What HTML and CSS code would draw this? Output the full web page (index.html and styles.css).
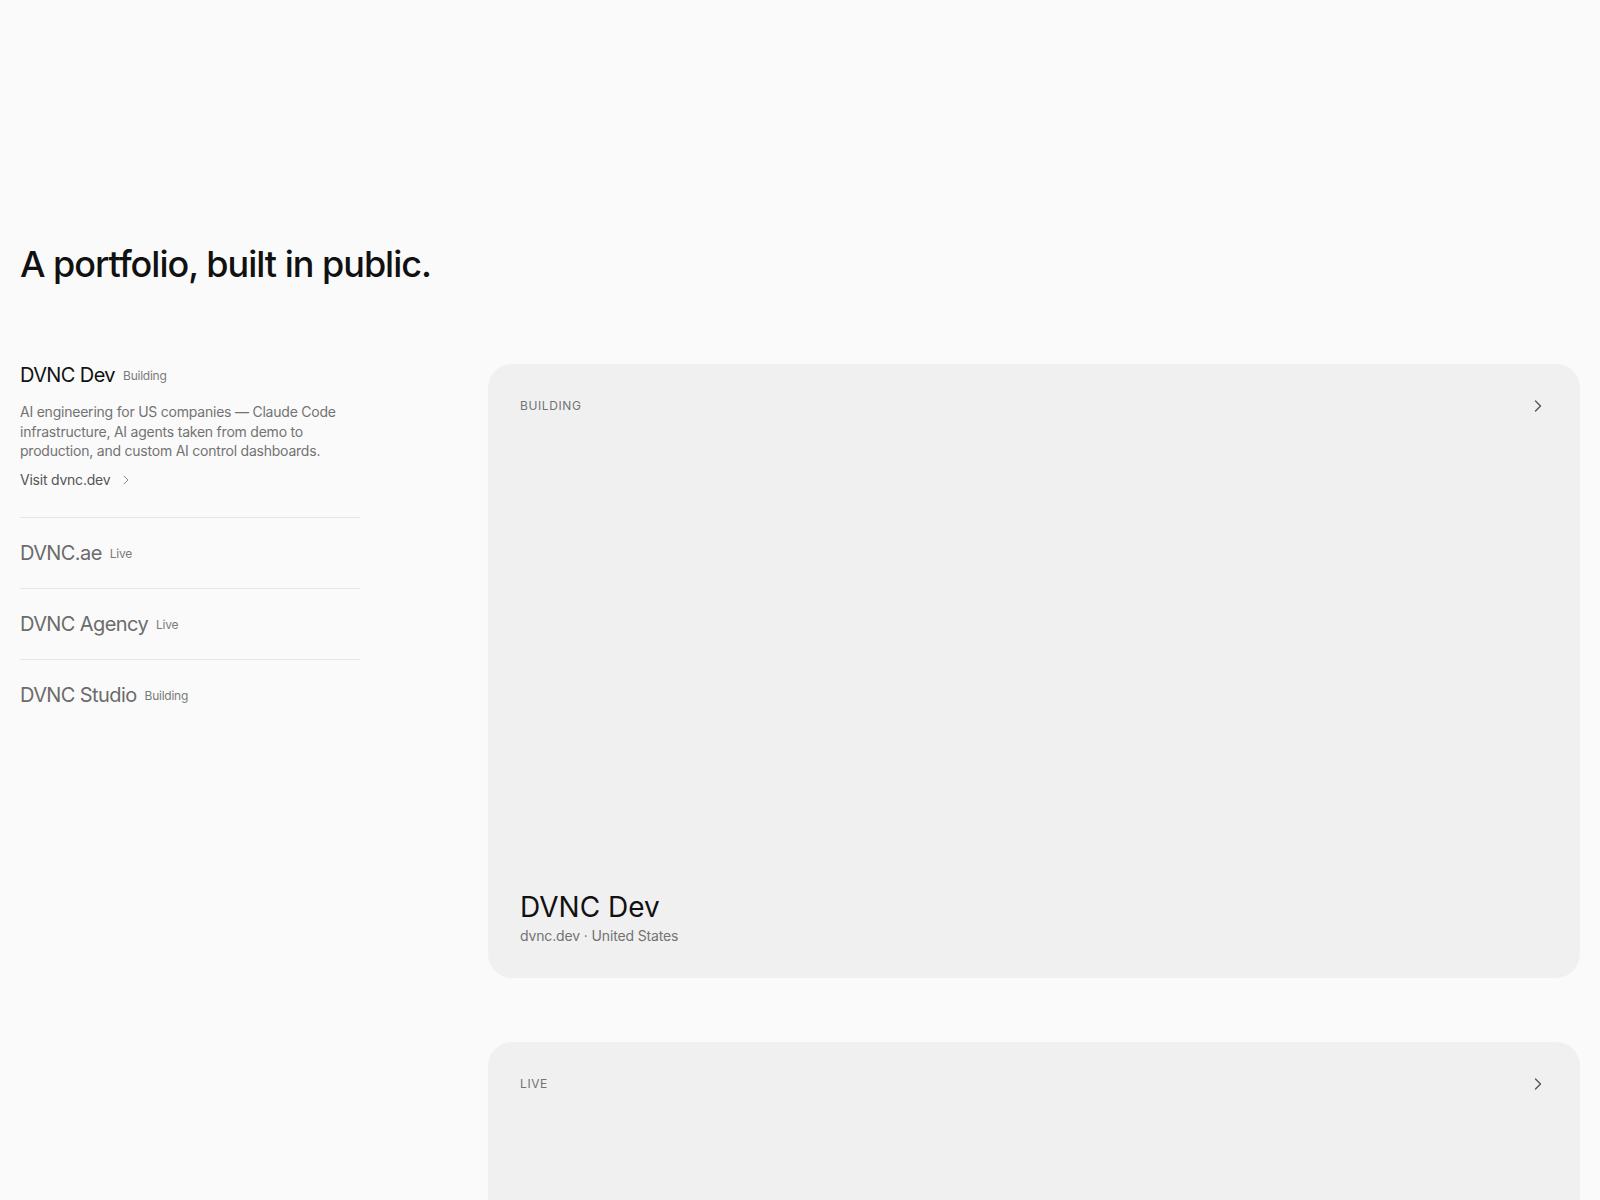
FILE: index.html
```html
<!DOCTYPE html>
<html lang="en">
<head>
  <meta charset="UTF-8" />
  <title>Portfolio</title>
  <link rel="stylesheet" href="styles.css">
</head>
<body>
  <main class="page">
    <h1 class="headline">A portfolio, built in public.</h1>

    <div class="layout">
      <ul class="ventures">
        <li class="venture active">
          <div class="venture-head">
            <span class="venture-name">DVNC Dev</span>
            <span class="venture-status">Building</span>
          </div>
          <p class="venture-desc">AI engineering for US companies — Claude Code infrastructure, AI agents taken from demo to production, and custom AI control dashboards.</p>
          <a class="venture-link" href="#">Visit dvnc.dev
            <svg width="16" height="16" viewBox="0 0 24 24" fill="none" stroke="currentColor" stroke-width="1.5" stroke-linecap="round" stroke-linejoin="round"><path d="m9 18 6-6-6-6"/></svg>
          </a>
        </li>
        <li class="venture">
          <div class="venture-head">
            <span class="venture-name">DVNC.ae</span>
            <span class="venture-status">Live</span>
          </div>
        </li>
        <li class="venture">
          <div class="venture-head">
            <span class="venture-name">DVNC Agency</span>
            <span class="venture-status">Live</span>
          </div>
        </li>
        <li class="venture">
          <div class="venture-head">
            <span class="venture-name">DVNC Studio</span>
            <span class="venture-status">Building</span>
          </div>
        </li>
      </ul>

      <div class="cards">
        <a class="card" href="#">
          <div class="card-top">
            <span class="card-label">Building</span>
            <svg class="card-arrow" width="20" height="20" viewBox="0 0 24 24" fill="none" stroke="currentColor" stroke-width="1.6" stroke-linecap="round" stroke-linejoin="round"><path d="m9 18 6-6-6-6"/></svg>
          </div>
          <div class="card-bottom">
            <div class="card-title">DVNC Dev</div>
            <div class="card-meta">dvnc.dev · United States</div>
          </div>
        </a>

        <a class="card" href="#">
          <div class="card-top">
            <span class="card-label">Live</span>
            <svg class="card-arrow" width="20" height="20" viewBox="0 0 24 24" fill="none" stroke="currentColor" stroke-width="1.6" stroke-linecap="round" stroke-linejoin="round"><path d="m9 18 6-6-6-6"/></svg>
          </div>
          <div class="card-bottom">
            <div class="card-title">DVNC.ae</div>
            <div class="card-meta">dvnc.ae · United Arab Emirates</div>
          </div>
        </a>
      </div>
    </div>
  </main>
</body>
</html>
```

FILE: styles.css
```css
* {
  box-sizing: border-box;
}

body {
  margin: 0;
  background: #fafafa;
  color: #111;
  font-family: Inter, "Noto Sans", Arial, sans-serif;
}

a {
  color: inherit;
  text-decoration: none;
}

.page {
  padding: 244px 20px 80px;
}

.headline {
  margin: 0 0 56px;
  font-size: 36px;
  line-height: 40px;
  font-weight: 500;
  letter-spacing: -0.028em;
}

.layout {
  display: grid;
  grid-template-columns: 340px 1fr;
  gap: 128px;
  align-items: start;
}

.ventures {
  list-style: none;
  margin: 0;
  padding: 0;
}

.venture {
  padding: 21px 0;
  border-top: 1px solid #e6e6e6;
}

.venture:first-child {
  border-top: none;
}

.venture.active {
  padding-bottom: 27px;
}

.venture-head {
  display: flex;
  align-items: center;
  gap: 8px;
}

.venture-name {
  font-size: 20px;
  line-height: 28px;
  color: #6b6b6b;
  letter-spacing: -0.03em;
}

.active .venture-name {
  color: #111;
}

.venture-status {
  font-size: 12px;
  color: #7a7a7a;
  letter-spacing: -0.02em;
}

.venture-desc {
  margin: 13px 0 0;
  font-size: 14px;
  line-height: 19.7px;
  letter-spacing: -0.016em;
  color: #737373;
}

.venture-link {
  display: inline-flex;
  align-items: center;
  gap: 8px;
  margin-top: 9px;
  font-size: 14px;
  line-height: 20px;
  letter-spacing: -0.016em;
  color: #555;
}

.venture-link svg {
  color: #8a8a8a;
}

.cards {
  display: flex;
  flex-direction: column;
  gap: 64px;
  padding-top: 24px;
}

.card {
  display: flex;
  flex-direction: column;
  justify-content: space-between;
  aspect-ratio: 16 / 9;
  padding: 32px;
  background: #f0f0f0;
  border-radius: 24px;
}

.card-top {
  display: flex;
  align-items: center;
  justify-content: space-between;
}

.card-label {
  font-size: 12px;
  line-height: 16px;
  letter-spacing: 0.05em;
  text-transform: uppercase;
  color: #737373;
}

.card-arrow {
  color: #555;
}

.card-title {
  font-size: 28px;
  line-height: 34px;
  color: #111;
}

.card-meta {
  margin-top: 2px;
  font-size: 14px;
  line-height: 20px;
  letter-spacing: -0.01em;
  color: #737373;
}
```
